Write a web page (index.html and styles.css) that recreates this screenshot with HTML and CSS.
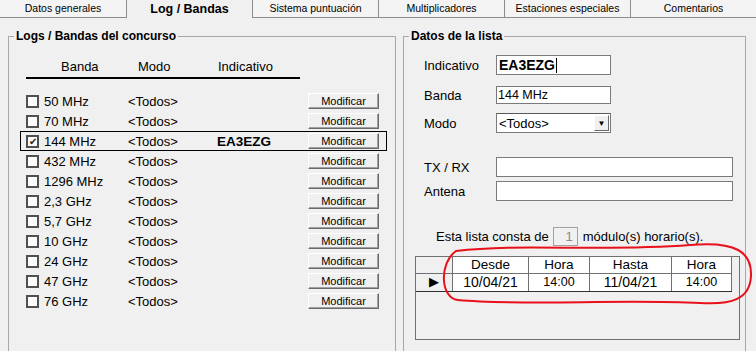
FILE: index.html
```html
<!DOCTYPE html>
<html lang="es">
<head>
    <meta charset="UTF-8">
    <title>Log / Bandas</title>
    <link rel="stylesheet" href="styles.css">
</head>
<body>
    <div class="tabs">
        <div class="tab">Datos generales</div>
        <div class="tab active">Log / Bandas</div>
        <div class="tab">Sistema puntuación</div>
        <div class="tab">Multiplicadores</div>
        <div class="tab">Estaciones especiales</div>
        <div class="tab">Comentarios</div>
    </div>

    <div class="page">
        <fieldset class="group logs">
            <legend>Logs / Bandas del concurso</legend>
            <div class="head">
                <span class="h-banda">Banda</span>
                <span class="h-modo">Modo</span>
                <span class="h-ind">Indicativo</span>
            </div>
            <div class="bands">
                <div class="band"><span class="chk"></span><span class="name">50 MHz</span><span class="modo">&lt;Todos&gt;</span><span class="ind"></span><button class="btn">Modificar</button></div>
                <div class="band"><span class="chk"></span><span class="name">70 MHz</span><span class="modo">&lt;Todos&gt;</span><span class="ind"></span><button class="btn">Modificar</button></div>
                <div class="band selected"><span class="chk checked">✔</span><span class="name">144 MHz</span><span class="modo">&lt;Todos&gt;</span><span class="ind">EA3EZG</span><button class="btn">Modificar</button></div>
                <div class="band"><span class="chk"></span><span class="name">432 MHz</span><span class="modo">&lt;Todos&gt;</span><span class="ind"></span><button class="btn">Modificar</button></div>
                <div class="band"><span class="chk"></span><span class="name">1296 MHz</span><span class="modo">&lt;Todos&gt;</span><span class="ind"></span><button class="btn">Modificar</button></div>
                <div class="band"><span class="chk"></span><span class="name">2,3 GHz</span><span class="modo">&lt;Todos&gt;</span><span class="ind"></span><button class="btn">Modificar</button></div>
                <div class="band"><span class="chk"></span><span class="name">5,7 GHz</span><span class="modo">&lt;Todos&gt;</span><span class="ind"></span><button class="btn">Modificar</button></div>
                <div class="band"><span class="chk"></span><span class="name">10 GHz</span><span class="modo">&lt;Todos&gt;</span><span class="ind"></span><button class="btn">Modificar</button></div>
                <div class="band"><span class="chk"></span><span class="name">24 GHz</span><span class="modo">&lt;Todos&gt;</span><span class="ind"></span><button class="btn">Modificar</button></div>
                <div class="band"><span class="chk"></span><span class="name">47 GHz</span><span class="modo">&lt;Todos&gt;</span><span class="ind"></span><button class="btn">Modificar</button></div>
                <div class="band"><span class="chk"></span><span class="name">76 GHz</span><span class="modo">&lt;Todos&gt;</span><span class="ind"></span><button class="btn">Modificar</button></div>
            </div>
        </fieldset>

        <fieldset class="group lista">
            <legend>Datos de la lista</legend>
            <div class="field f-ind">
                <label>Indicativo</label>
                <div class="input short bold">EA3EZG<span class="caret"></span></div>
            </div>
            <div class="field f-banda">
                <label>Banda</label>
                <div class="input short small">144 MHz</div>
            </div>
            <div class="field f-modo">
                <label>Modo</label>
                <div class="select short">
                    <span>&lt;Todos&gt;</span>
                    <span class="arrow">▼</span>
                </div>
            </div>
            <div class="field f-tx">
                <label>TX / RX</label>
                <div class="input long"></div>
            </div>
            <div class="field f-ant">
                <label>Antena</label>
                <div class="input long"></div>
            </div>

            <div class="modules">
                Esta lista consta de <span class="num">1</span> módulo(s) horario(s).
            </div>

            <div class="grid">
                <table>
                    <tr class="grid-head">
                        <td class="ind-col"></td>
                        <td class="c-desde">Desde</td>
                        <td class="c-hora">Hora</td>
                        <td class="c-hasta">Hasta</td>
                        <td class="c-hora2">Hora</td>
                    </tr>
                    <tr class="grid-row">
                        <td class="ind-col"><span class="pointer">▶</span></td>
                        <td class="big">10/04/21</td>
                        <td>14:00</td>
                        <td class="big">11/04/21</td>
                        <td>14:00</td>
                    </tr>
                </table>
            </div>
        </fieldset>
    </div>

    <!-- anotación a mano sobre la captura -->
    <svg class="scribble" width="756" height="351" viewBox="0 0 756 351">
        <path d="M 456 251 C 520 243, 600 252, 690 245 C 736 241, 752 252, 751 276 C 750 299, 732 305, 700 303 C 620 299, 520 306, 458 300 C 440 298, 439 263, 456 251 Z"
              fill="none" stroke="#e8101a" stroke-width="2"/>
    </svg>
</body>
</html>
```

FILE: styles.css
```css
html, body {
    margin: 0;
    padding: 0;
}
body {
    width: 756px;
    height: 351px;
    overflow: hidden;
    background: #f0f0f0;
    font-family: "Liberation Sans", Arial, sans-serif;
    font-size: 13px;
    color: #000;
    position: relative;
}

/* pestañas */
.tabs {
    display: flex;
    height: 17px;
    border-bottom: 1px solid #8c8c8c;
}
.tab {
    width: 126px;
    box-sizing: border-box;
    border-right: 1px solid #8c8c8c;
    background: #f4f4f4;
    font-size: 10.5px;
    line-height: 17px;
    text-align: center;
}
.tab:first-child {
    width: 127px;
}
.tab:last-child {
    flex: 1;
    border-right: none;
}
.tab.active {
    background: #f0f0f0;
    font-weight: bold;
    font-size: 12.5px;
    height: 18px;
    margin-bottom: -1px;
    line-height: 19px;
}

.page {
    display: flex;
    gap: 7px;
    padding: 11px 0 0 8px;
}

.group {
    margin: 0;
    padding: 0;
    border: 1px solid #a8a8a8;
    height: 323px;
    box-sizing: border-box;
}
.group legend {
    margin-left: 5px;
    padding: 0 2px;
    font-size: 12px;
    font-weight: bold;
    line-height: 14px;
}
.logs {
    width: 388px;
}
.lista {
    width: 343px;
}

/* tabla de bandas */
.head {
    display: flex;
    margin: 16px 0 0 17px;
    width: 274px;
    padding: 0 0 2px 35px;
    box-sizing: border-box;
    line-height: 16px;
    border-bottom: 2px solid #000;
}
.h-banda { width: 77px; }
.h-modo { width: 80px; }

.bands {
    margin: 12px 0 0 11px;
    width: 367px;
}
.band {
    display: flex;
    align-items: center;
    height: 20px;
    box-sizing: border-box;
    border: 1px solid transparent;
    padding-left: 5px;
}
.band.selected {
    border-color: #000;
}
.chk {
    width: 13px;
    height: 13px;
    box-sizing: border-box;
    border: 2px solid #505050;
    background: #fbfbfb;
    margin-right: 5px;
    font-size: 10px;
    line-height: 9px;
    text-align: center;
    color: #222;
}
.name { width: 84px; }
.modo { width: 89px; }
.ind {
    width: 91px;
    font-weight: bold;
    font-size: 13.5px;
}
.btn {
    width: 71px;
    height: 16px;
    padding: 0;
    font-family: inherit;
    font-size: 11px;
    line-height: 13px;
    color: #000;
    background: #f0f0f0;
    border: 1px solid;
    border-color: #fff #6a6a6a #6a6a6a #fff;
    box-shadow: inset -1px -1px 0 #a0a0a0;
}

/* datos de la lista */
.field {
    display: flex;
    align-items: center;
    padding-left: 20px;
}
.field label {
    width: 72px;
}
.f-ind { margin-top: 12px; height: 20px; }
.f-banda { margin-top: 11px; height: 18px; }
.f-modo { margin-top: 9px; height: 20px; }
.f-tx { margin-top: 24px; height: 20px; }
.f-ant { margin-top: 4px; height: 20px; }

.input {
    height: 100%;
    box-sizing: border-box;
    border: 1px solid #7a7a7a;
    background: #fff;
    padding-left: 2px;
    display: flex;
    align-items: center;
}
.short { width: 115px; }
.long { width: 237px; }
.bold {
    font-weight: bold;
    font-size: 14px;
}
.small {
    font-size: 12.5px;
    padding-left: 1px;
}
.caret {
    width: 1px;
    height: 15px;
    background: #000;
    margin-left: 1px;
}
.select {
    height: 100%;
    box-sizing: border-box;
    border: 1px solid #7a7a7a;
    border-top-color: #5a5a5a;
    background: #fff;
    display: flex;
    align-items: center;
    justify-content: space-between;
    padding: 0 1px 0 2px;
}
.arrow {
    width: 15px;
    height: 16px;
    box-sizing: border-box;
    background: #f0f0f0;
    border: 1px solid;
    border-color: #fff #6a6a6a #6a6a6a #fff;
    font-size: 8px;
    line-height: 15px;
    text-align: center;
}

.modules {
    display: flex;
    align-items: center;
    margin: 26px 0 0 32px;
    height: 19px;
    font-size: 13px;
}
.num {
    width: 25px;
    height: 19px;
    box-sizing: border-box;
    border: 1px solid #a0a0a0;
    margin: 0 5px 0 4px;
    text-align: right;
    padding-right: 4px;
    color: #8a8a8a;
    line-height: 17px;
}

.grid {
    margin: 10px 0 0 11px;
    width: 325px;
    height: 84px;
    box-sizing: border-box;
    border: 1px solid #707070;
    background: #f0f0f0;
}
.grid table {
    border-collapse: collapse;
    text-align: center;
}
.grid td {
    padding: 0;
    border-right: 1px solid #707070;
    border-bottom: 1px solid #707070;
    background: #fff;
    font-size: 13.5px;
}
.grid-head td {
    height: 16px;
    line-height: 16px;
}
.grid-row td {
    height: 17px;
    line-height: 17px;
    font-size: 12.5px;
    border-bottom-color: #303030;
}
.grid-row td.big {
    font-size: 14px;
}
.grid .ind-col {
    width: 36px;
    background: #f0f0f0;
}
.c-desde { width: 75px; }
.c-hora { width: 60px; }
.c-hasta { width: 81px; }
.c-hora2 { width: 59px; }
.pointer {
    font-size: 13px;
    line-height: 15px;
}

.scribble {
    position: absolute;
    top: 0;
    left: 0;
    pointer-events: none;
}
```
